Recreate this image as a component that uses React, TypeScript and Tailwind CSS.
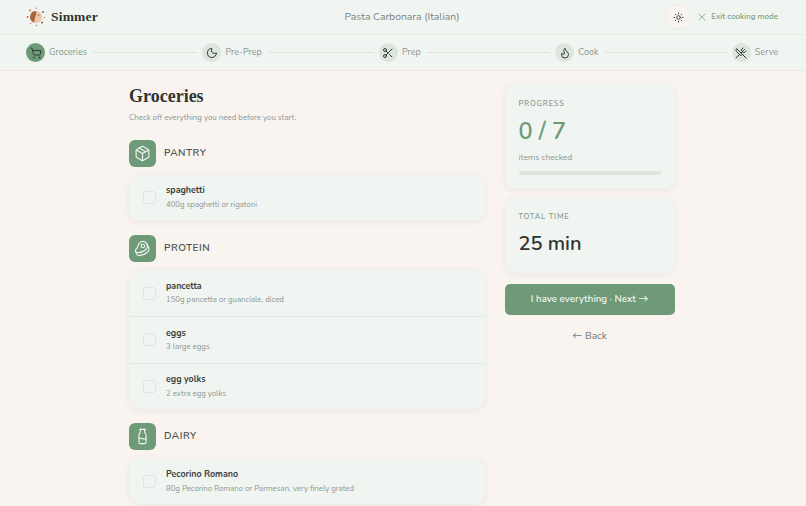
import { Beef, Flame, Milk, Moon, Package, Scissors, ShoppingCart, Sun, UtensilsCrossed, X } from 'lucide-react'

const steps = [
    { label: 'Groceries', icon: ShoppingCart },
    { label: 'Pre-Prep', icon: Moon },
    { label: 'Prep', icon: Scissors },
    { label: 'Cook', icon: Flame },
    { label: 'Serve', icon: UtensilsCrossed }
]

const groups = [
    {
        name: 'PANTRY',
        icon: Package,
        items: [{ name: 'spaghetti', detail: '400g spaghetti or rigatoni' }]
    },
    {
        name: 'PROTEIN',
        icon: Beef,
        items: [
            { name: 'pancetta', detail: '150g pancetta or guanciale, diced' },
            { name: 'eggs', detail: '3 large eggs' },
            { name: 'egg yolks', detail: '2 extra egg yolks' }
        ]
    },
    {
        name: 'DAIRY',
        icon: Milk,
        items: [{ name: 'Pecorino Romano', detail: '80g Pecorino Romano or Parmesan, very finely grated' }]
    }
]

function Logo() {
    return (
        <svg width="20" height="20" viewBox="0 0 20 20" className="shrink-0">
            <circle cx="10" cy="10" r="6" fill="#eec4a6" />
            <path d="M10 4a6 6 0 0 0-2 11.6c1-2 .2-3.4 1-5.2.6-1.6 1.6-3.6 1-6.4z" fill="#a9623f" />
            <circle cx="12.5" cy="8" r="1" fill="#c98a63" />
            <circle cx="4" cy="3.5" r="0.9" fill="#b4694a" />
            <circle cx="10" cy="1.2" r="0.8" fill="#c98a63" />
            <circle cx="17" cy="5" r="0.9" fill="#8d4a30" />
            <circle cx="18.4" cy="10.5" r="0.8" fill="#c98a63" />
            <circle cx="16" cy="15.5" r="0.9" fill="#8d4a30" />
            <circle cx="1.6" cy="10" r="0.9" fill="#b4694a" />
            <circle cx="10.5" cy="18.6" r="0.8" fill="#c98a63" />
            <circle cx="4.5" cy="16.6" r="0.8" fill="#c98a63" />
        </svg>
    )
}

export default function App() {
    return (
        <div className="h-[506px] w-[806px] overflow-hidden bg-[#f9f4f0] font-['Nunito','Lato','Open_Sans',sans-serif] text-[#2f3531]">
            {/* Top bar */}
            <header className="flex h-[35px] items-center justify-between border-b border-[#e6ebe6] bg-[#f0f5f1] pl-[26px] pr-[28px]">
                <div className="flex w-[200px] items-center gap-[5px]">
                    <Logo />
                    <span className="font-['Liberation_Serif',serif] text-[13.5px] font-bold tracking-[0.2px] text-[#30352f]">Simmer</span>
                </div>
                <span className="text-[10.4px] text-[#7c837e]">Pasta Carbonara (Italian)</span>
                <div className="flex w-[200px] items-center justify-end gap-[7px]">
                    <button className="flex h-[22px] w-[22px] items-center justify-center rounded-md bg-[#f9f4f0] shadow-[0_0_3px_rgba(0,0,0,0.06)]">
                        <Sun className="h-[11px] w-[11px] text-[#3a3f3b]" />
                    </button>
                    <span className="flex items-center gap-[3px] text-[8px] font-semibold text-[#7f9f88]">
                        <X className="h-3 w-3" strokeWidth={1.5} />
                        Exit cooking mode
                    </span>
                </div>
            </header>

            {/* Steps */}
            <nav className="flex h-[36px] items-center border-b border-[#ece8e3] bg-[#f0f5f1] pl-[26px] pr-[28px]">
                {steps.map((step, index) => {
                    const Icon = step.icon
                    const active = index === 0
                    const last = index === steps.length - 1
                    return (
                        <div key={step.label} className={`flex items-center ${last ? '' : 'w-[176.5px]'}`}>
                            <div className={`flex h-[19px] w-[19px] shrink-0 items-center justify-center rounded-full ${active ? 'bg-[#6f9a78]' : 'bg-[#dce6df]'}`}>
                                <Icon className="h-3 w-3 text-[#2f3d33]" />
                            </div>
                            <span className={`ml-[4px] text-[9px] ${active ? 'text-[#7f9f88]' : 'text-[#8e9691]'}`}>{step.label}</span>
                            {!last && <div className="ml-[6px] mr-[5px] h-px flex-1 bg-[#dce5de]" />}
                        </div>
                    )
                })}
            </nav>

            {/* Content */}
            <main className="mx-auto flex w-[548px] gap-[19.5px] pt-[13px]">
                <div className="w-[356px]">
                    <h1 className="font-['Liberation_Serif',serif] text-[18px] font-bold leading-[24px] text-[#30352f]">Groceries</h1>
                    <p className="mb-[16px] mt-[3.5px] text-[7.9px] leading-[12px] text-[#8e9691]">Check off everything you need before you start.</p>
                    {groups.map((group) => {
                        const Icon = group.icon
                        return (
                            <section key={group.name} className="mb-[14px]">
                                <div className="flex items-center gap-[8px]">
                                    <div className="flex h-[27px] w-[27px] items-center justify-center rounded-md bg-[#6f9a78]">
                                        <Icon className="h-[17px] w-[17px] text-[#f0f5f1]" strokeWidth={1.6} />
                                    </div>
                                    <h2 className="text-[10px] font-semibold tracking-[0.5px] text-[#4b514d]">{group.name}</h2>
                                </div>
                                <div className="mt-[8px] rounded-xl bg-[#f0f5f1] shadow-[0_1px_6px_rgba(90,80,70,0.09)]">
                                    {group.items.map((item, i) => (
                                        <div key={item.name} className={`flex h-[46.4px] items-center pl-[14px] ${i > 0 ? 'border-t border-[#e3e9e4]' : ''}`}>
                                            <span className="h-[13px] w-[13px] rounded-[3px] border border-[#dfe6e1]" />
                                            <div className="ml-[10px]">
                                                <div className="text-[8.9px] font-bold leading-[13px] text-[#3c423e]">{item.name}</div>
                                                <div className="mt-[1.5px] text-[7.8px] leading-[12px] text-[#8e9691]">{item.detail}</div>
                                            </div>
                                        </div>
                                    ))}
                                </div>
                            </section>
                        )
                    })}
                </div>

                <aside className="w-[170px]">
                    <div className="h-[105px] rounded-xl bg-[#f0f5f1] px-[14px] pt-[13.5px] shadow-[0_1px_6px_rgba(90,80,70,0.09)]">
                        <div className="text-[7.5px] font-semibold tracking-[0.8px] text-[#8e9691]">PROGRESS</div>
                        <div className="mt-[7.25px] text-[23.5px] font-semibold leading-[30px] text-[#6f9a78]">0 / 7</div>
                        <div className="mt-[5px] text-[8.5px] leading-[12px] text-[#8e9691]">items checked</div>
                        <div className="mt-[8px] h-[4px] rounded-full bg-[#dce6df]" />
                    </div>
                    <div className="mt-[9px] h-[75px] rounded-xl bg-[#f0f5f1] px-[14px] pt-[12.5px] shadow-[0_1px_6px_rgba(90,80,70,0.09)]">
                        <div className="text-[7.5px] font-semibold tracking-[0.8px] text-[#8e9691]">TOTAL TIME</div>
                        <div className="mt-[8px] text-[20px] font-semibold leading-[28px] text-[#2f3531]">25 min</div>
                    </div>
                    <button className="mt-[11px] h-[31px] w-full rounded-[5px] bg-[#6f9a78] text-[9.75px] font-semibold text-[#f0f5f1]">I have everything · Next →</button>
                    <div className="mt-[13.5px] text-center text-[10px] font-medium leading-[15px] text-[#7c837e]">← Back</div>
                </aside>
            </main>
        </div>
    )
}
